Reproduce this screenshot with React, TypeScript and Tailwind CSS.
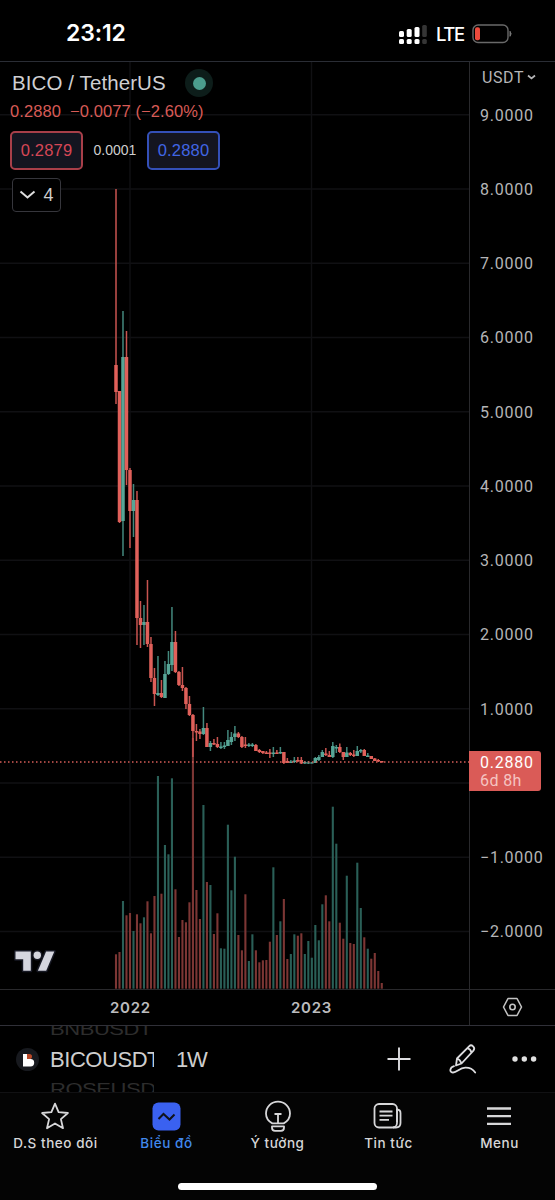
import type { ReactNode } from 'react'

type Candle = [dir: 0 | 1, high: number, top: number, bottom: number, low: number]

// dir: 1 = rising, 0 = falling. Values are chart pixels measured from the screen top.
const candles: Candle[] = [
  [0, 189, 365, 392, 404], [0, 391, 391, 522, 523], [1, 311, 357, 521, 556], [0, 331, 357, 470, 485],
  [0, 468, 470, 511, 548], [1, 484, 500, 511, 537], [0, 491, 500, 618, 645], [0, 601, 618, 625, 648],
  [1, 605, 622, 625, 645], [0, 580, 622, 644, 647], [0, 637, 644, 678, 682], [0, 668, 678, 694, 706],
  [1, 656, 693, 695, 696], [0, 680, 693, 697, 698], [1, 661, 674, 698, 698], [1, 651, 664, 674, 675],
  [1, 607, 642, 665, 671], [0, 631, 642, 672, 673], [0, 671, 672, 685, 686], [0, 667, 685, 688, 691],
  [0, 687, 688, 704, 709], [0, 696, 704, 715, 716], [0, 714, 715, 731, 757], [0, 724, 731, 732.5, 741],
  [0, 729, 731.5, 734, 739], [1, 707, 728, 734, 735], [0, 723, 728, 747, 747], [1, 741, 743, 747, 751],
  [0, 739, 743, 744.5, 745], [0, 737, 744, 747, 748], [1, 742, 746.5, 748, 749], [1, 742, 745.5, 747, 749],
  [1, 730, 740, 746, 746], [1, 732, 737, 742, 745], [1, 726, 733.5, 737, 741], [0, 732, 733.5, 737, 738],
  [0, 736, 737, 747, 748], [0, 737, 744.5, 746, 748], [1, 743, 744.5, 746, 747], [1, 743, 744.5, 746, 747],
  [0, 744, 745, 751, 751], [0, 749, 750, 752, 753], [0, 751, 751, 753, 754], [0, 751, 752.5, 754, 754],
  [0, 749, 752.5, 754, 758], [1, 747, 752.5, 754, 757], [0, 750, 752.5, 754, 754], [1, 747, 752, 753.5, 754],
  [0, 752, 752, 763, 764], [0, 758, 761, 763, 763], [1, 760, 761.5, 763, 763], [1, 757, 760.5, 762, 763],
  [0, 757, 760, 761.5, 762], [0, 757, 760, 763.5, 764], [1, 761, 762, 763.5, 764], [1, 761, 762.5, 763.5, 764],
  [1, 762, 762.5, 763.5, 763.5], [1, 757, 758, 763, 763], [1, 755, 757, 760, 761], [1, 750, 752, 757, 757],
  [0, 748, 753.5, 755, 756], [0, 751, 755, 757, 757], [1, 742, 746, 757, 758], [1, 745, 747, 748.5, 753],
  [0, 743.5, 747, 752, 753], [0, 752, 752, 757, 760], [1, 747, 752.5, 757, 757], [0, 752, 753, 755, 756],
  [0, 750, 754.5, 756, 757], [1, 746, 751, 756, 756], [1, 749, 750, 751.5, 753], [0, 749, 750, 756, 756],
  [1, 753, 755.5, 757, 757], [0, 756, 756, 759, 759], [0, 758, 758.5, 761, 761], [0, 759, 760, 761.5, 762],
  [0, 761, 761, 762.5, 762.5],
]

const volumeTops = [
  954.3, 952, 901, 915.3, 913, 931, 914.3, 923.3, 917.3, 901.3, 933.3, 896, 776, 893.7, 845, 854.3, 778.3, 889.3,
  937, 920, 922.3, 902.3, 738, 890, 919, 805, 882, 885, 934, 913.3, 948.3, 948.7, 824.7, 890.3, 856.7, 935, 950.3,
  894.3, 961, 934.3, 950.3, 962.3, 960.3, 960, 941.7, 867.3, 935, 921.3, 899, 959, 954, 934.3, 935.7, 933.3, 954,
  941, 957.7, 925, 940.3, 904.3, 895.3, 921.3, 806.7, 843.7, 922.7, 938.7, 875.7, 943, 944, 862.7, 908, 937.3,
  948.7, 958.7, 953, 971, 983,
]

const FIRST_X = 116
const STEP = 3.497
const CHART_TOP = 62
// The zero row stays blank: the last-price tag covers it.
const priceLabels = ['9.0000', '8.0000', '7.0000', '6.0000', '5.0000', '4.0000', '3.0000', '2.0000', '1.0000', '', '−1.0000', '−2.0000']

function StatusBar() {
  return (
    <header className="flex h-[61px] shrink-0 items-start justify-between pr-[42px] pl-[66px]">
      <span className="mt-[19px] font-[Inter] text-[23px] leading-[29px] font-semibold tracking-[-0.1px] text-white">23:12</span>
      <div className="mt-[22px] flex h-6 items-center">
        <svg width="30" height="21" viewBox="0 0 30 21" fill="#fff">
          <rect x="0" y="7" width="5" height="6" rx="1.5" />
          <rect x="7.7" y="5" width="5" height="8" rx="1.5" />
          <rect x="15.5" y="3" width="5" height="10" rx="1.5" />
          <rect x="23.2" y="1" width="4.6" height="12" rx="1.5" fill="#353535" />
          <rect x="0" y="15" width="5" height="5" rx="1.5" />
          <rect x="7.7" y="15" width="5" height="5" rx="1.5" />
          <rect x="15.5" y="15" width="5" height="5" rx="1.5" />
          <rect x="23.2" y="15" width="4.6" height="5" rx="1.5" fill="#353535" />
        </svg>
        <span className="ml-[7px] w-[28px] font-[Inter] text-[18.5px] leading-6 font-medium tracking-[-1.4px] whitespace-nowrap text-white">LTE</span>
        <svg className="ml-[8px]" width="41" height="20" viewBox="0 0 41 20" fill="none">
          <rect x="1" y="1" width="35" height="17.5" rx="5" stroke="#696969" strokeWidth="1.4" />
          <rect x="3" y="3.2" width="5" height="13" rx="2" fill="#ed4a3c" />
          <path d="M38 7.3q2.2 2.5 0 5z" fill="#777" stroke="#777" />
        </svg>
      </div>
    </header>
  )
}

function ChartDrawing() {
  return (
    <svg className="block" width="469" height="963" viewBox="0 62 469 963">
      <g stroke="#101013" strokeWidth="1.4">
        {priceLabels.map((_, i) => (
          <line key={i} x1="0" x2="469" y1={114.7 + i * 74.25} y2={114.7 + i * 74.25} />
        ))}
        <line x1="130" x2="130" y1={CHART_TOP} y2="989" />
        <line x1="311.5" x2="311.5" y1={CHART_TOP} y2="989" />
      </g>
      {volumeTops.map((top, i) => (
        <rect
          key={i}
          x={FIRST_X + i * STEP - 1.05}
          y={top}
          width="2.1"
          height={988.7 - top}
          fill={candles[i][0] ? '#2a5f57' : '#7c3634'}
        />
      ))}
      {candles.map(([dir, high, top, bottom, low], i) => {
        const x = FIRST_X + i * STEP
        return (
          <g key={i}>
            <rect x={x - 0.75} y={high} width="1.5" height={low - high} fill={dir ? '#43887d' : '#c95450'} />
            <rect x={x - 1.75} y={top} width="3.5" height={bottom - top} fill={dir ? '#56a596' : '#e0605a'} />
          </g>
        )
      })}
      <line x1="0" x2="469" y1="762" y2="762" stroke="#d65e58" strokeWidth="1.4" strokeDasharray="1.5 2.5" />
      <line x1="0" x2="469" y1="989.5" y2="989.5" stroke="#29292c" />
      <g fill="#d5d6df" stroke="#171924" strokeWidth="3" paintOrder="stroke" strokeLinejoin="round">
        <path d="M15.5 951.5h15.3V970.7h-7.6v-11.5h-7.7z" />
        <circle cx="37.3" cy="955.3" r="3.7" />
        <path d="M46.1 951.5h8.2L46.2 970.7h-8.3z" />
      </g>
    </svg>
  )
}

function Legend() {
  return (
    <div className="absolute top-0 left-0 flex w-[230px] flex-col font-['Liberation_Sans']">
      <div className="mt-[7px] flex h-7 items-center">
        <span className="ml-[12px] w-[154px] text-[20.5px] tracking-[0.1px] whitespace-nowrap text-[#cfcfd2]">BICO / TetherUS</span>
        <span className="ml-[19px] flex size-7 items-center justify-center rounded-full bg-[#0d1d1a]">
          <span className="size-[13px] rounded-full bg-[#4b9d8d]" />
        </span>
      </div>
      <div className="ml-[10px] flex h-[28px] items-center gap-[8px] text-[16.5px] tracking-[0.1px] whitespace-nowrap text-[#d85b56]">
        <span className="w-[52px]">0.2880</span>
        <span>−0.0077 (−2.60%)</span>
      </div>
      <div className="mt-[6px] ml-[10px] flex h-[39px] items-center">
        <span className="flex h-[39px] w-[73px] items-center justify-center rounded-[5px] border-2 border-[#a83f49] bg-[#141520] text-[16.5px] tracking-[0.2px] text-[#d64756]">0.2879</span>
        <span className="w-[64px] text-center text-[14px] text-[#cecece]">0.0001</span>
        <span className="flex h-[39px] w-[73px] items-center justify-center rounded-[5px] border-2 border-[#3450b8] bg-[#141520] text-[16.5px] tracking-[0.2px] text-[#4166e5]">0.2880</span>
      </div>
      <button className="mt-[8px] ml-[12px] flex h-[34px] w-[49px] items-center justify-center gap-[7px] rounded-[4px] border border-[#36363c] bg-black text-[18px] text-[#cecece]">
        <svg width="17" height="10" viewBox="0 0 17 10" fill="none" stroke="#dedede" strokeWidth="2">
          <path d="M1.5 1.5l7 6 7-6" />
        </svg>
        4
      </button>
    </div>
  )
}

function PriceAxis() {
  return (
    <aside className="relative flex w-[86px] flex-col border-l border-[#29292c] font-[Roboto] text-[#b5b5b7]">
      <div className="flex h-[16.4px] shrink-0 items-center gap-[2px] pl-[12px]">
        <span className="mt-[16px] w-[43px] text-[16px] tracking-[0.6px]">USDT</span>
        <svg className="mt-[15px]" width="9" height="7" viewBox="0 0 9 7" fill="none" stroke="#b5b5b7" strokeWidth="1.7">
          <path d="M1 1.5l3.5 3L8 1.5" />
        </svg>
      </div>
      {priceLabels.map((label, i) => (
        <div key={i} className="flex h-[74.25px] shrink-0 items-center pl-[10px] text-[16px] tracking-[0.75px] whitespace-nowrap">{label}</div>
      ))}
      <div className="mt-[20px] flex flex-1 items-center border-t border-[#29292c] pb-px pl-[32px]">
        <svg width="21" height="20" viewBox="0 0 21 20" fill="none" stroke="#c2c2c2" strokeWidth="1.6">
          <path d="M6 1.5h9L19.5 10 15 18.5H6L1.5 10z" strokeLinejoin="round" />
          <circle cx="10.5" cy="10" r="2.7" />
        </svg>
      </div>
      <div className="absolute top-[689px] -left-px flex h-[40px] w-[72px] flex-col justify-center rounded-r-[3px] bg-[#da5b57] pt-px pl-[11px] text-[16px] leading-[18px]">
        <span className="tracking-[0.75px] text-white">0.2880</span>
        <span className="tracking-[0.4px] text-[#f5c4c1]">6d 8h</span>
      </div>
    </aside>
  )
}

function SymbolBar() {
  return (
    <section className="flex h-[67px] shrink-0 items-center overflow-hidden border-t border-[#303038]">
      <svg className="ml-4 shrink-0" width="23" height="23" viewBox="0 0 23 23">
        <circle cx="11.5" cy="11.5" r="11.5" fill="#17191e" />
        <path d="M7 6h5v5h2.5a3.7 3.7 0 010 7.4H7z" fill="#fff" />
        <path d="M11 6h2.3a2.7 2.7 0 012.7 2.8c0 1.2-.7 2.1-1.8 2.3H11z" fill="#ba4827" />
      </svg>
      <div className="ml-[11px] flex h-[68px] w-[104px] shrink-0 flex-col items-start justify-center gap-[3px] overflow-hidden font-['Liberation_Sans'] text-[22px] tracking-[-0.45px] whitespace-nowrap">
        <span className="h-[31px] shrink-0 origin-bottom-left scale-y-75 leading-[31px] text-[#2d2d2d]">BNBUSDT</span>
        <span className="h-[31px] shrink-0 leading-[31px] text-[#cecece]">BICOUSDT</span>
        <span className="h-[31px] shrink-0 origin-top-left scale-y-75 leading-[31px] text-[#2d2d2d]">ROSEUSDT</span>
      </div>
      <span className="ml-[22px] w-[34px] font-['Liberation_Sans'] text-[22px] tracking-[-1.2px] text-[#cecece]">1W</span>
      <div className="ml-auto flex items-center pr-[18px]">
        <svg width="24" height="24" viewBox="0 0 24 24" stroke="#dddde0" strokeWidth="1.9">
          <path d="M12 .5v23M.5 12h23" />
        </svg>
        <svg className="ml-[38px]" width="28" height="32" viewBox="0 0 28 32" fill="none" stroke="#dddde0" strokeWidth="1.8" strokeLinecap="round" strokeLinejoin="round">
          <path d="M7 22.5l1-7L20.3 3.1q1.7-1.7 3.8.2t.3 4.3L12.5 20.5zM8 15.5q3 .8 4.5 5M18.3 5.2q3.3.8 4.2 4.3" />
          <path d="M5 23.2c-4 1.3-5.2 5.8-1.2 6.3 4 .5 6.2-4.5 12.5-4.8 5.3-.2 7.5 1.4 9.9 4.8" />
        </svg>
        <svg className="ml-[35px]" width="25" height="6" viewBox="0 0 25 6" fill="#e0e0e0">
          <circle cx="3" cy="3" r="2.7" /><circle cx="12.3" cy="3" r="2.7" /><circle cx="21.6" cy="3" r="2.7" />
        </svg>
      </div>
    </section>
  )
}

function NavItem({ label, active = false, children }: { label: string; active?: boolean; children: ReactNode }) {
  return (
    <button className={`flex w-[111px] shrink-0 flex-col items-center ${active ? 'text-[#4188eb]' : 'text-[#d7d7d9]'}`}>
      <span className="flex h-[32px] items-center justify-center">{children}</span>
      <span className="mt-[1px] text-[13.5px] leading-5 font-medium tracking-[0.55px] whitespace-nowrap">{label}</span>
    </button>
  )
}

function BottomNav() {
  return (
    <footer className="flex flex-1 flex-col items-center border-t border-[#111113] bg-[#040404]">
      <nav className="mt-[7px] flex w-full">
        <NavItem label="D.S theo dõi">
          <svg className="mr-px" width="30" height="30" viewBox="0 0 30 30" fill="none" stroke="currentColor" strokeWidth="1.8" strokeLinejoin="round">
            <path d="M15 2.7l3.6 8.5 9.3.8-7 6.1 2.1 9.1-8-4.8-8 4.8L9.1 18.1l-7-6.1 9.3-.8z" />
          </svg>
        </NavItem>
        <NavItem label="Biểu đồ" active>
          <svg width="29" height="29" viewBox="0 0 29 29" fill="none">
            <rect x=".5" y=".5" width="28" height="28" rx="6" fill="#3a61f0" />
            <path d="M6.5 17l5-5 6 5.5 5-5" stroke="#10131c" strokeWidth="2" />
          </svg>
        </NavItem>
        <NavItem label="Ý tưởng">
          <svg width="28" height="32" viewBox="0 0 28 32" fill="none" stroke="currentColor" strokeWidth="1.8" strokeLinejoin="round">
            <path d="M8.3 23.4C4.2 21.2 2 17.7 2 13.6a12 12 0 0124 0c0 4.1-2.2 7.6-6.3 9.8zM8 26.3h12v1.5q0 3-3 3h-6q-3 0-3-3zM10.5 14h7M14 14v9" />
          </svg>
        </NavItem>
        <NavItem label="Tin tức">
          <svg className="mr-[2px]" width="29" height="28" viewBox="0 0 29 28" fill="none" stroke="currentColor" strokeWidth="1.8">
            <rect x="1.5" y="2" width="22.5" height="23.5" rx="4.5" />
            <path d="M24 7.5q3.5.3 3.5 3.5v10q0 4.5-4.5 4.5h-3M24 7v13M6.5 9.5h13M6.5 13.7h13M6.5 17.9h9.5" />
          </svg>
        </NavItem>
        <NavItem label="Menu">
          <svg className="mr-[2px]" width="26" height="22" viewBox="0 0 26 22" stroke="currentColor" strokeWidth="2.3">
            <path d="M1 3.5h24M1 11.2h24M1 18.9h24" />
          </svg>
        </NavItem>
      </nav>
      <div className="mt-[30px] h-[7px] w-[199px] rounded-full bg-white" />
    </footer>
  )
}

export default function App() {
  return (
    <main className="flex h-[1200px] w-[555px] flex-col overflow-hidden bg-black font-[Inter,sans-serif]">
      <StatusBar />
      <section className="flex h-[964px] shrink-0 border-t border-[#2a2d35]">
        <div className="relative w-[469px] shrink-0 overflow-hidden">
          <ChartDrawing />
          <Legend />
          <div className="absolute inset-x-0 bottom-0 flex h-[33px] items-center text-[15px] font-semibold tracking-[0.7px] text-[#bcbcbe]">
            <span className="ml-[110px] w-[42px]">2022</span>
            <span className="ml-[139px] w-[42px]">2023</span>
          </div>
        </div>
        <PriceAxis />
      </section>
      <SymbolBar />
      <BottomNav />
    </main>
  )
}
